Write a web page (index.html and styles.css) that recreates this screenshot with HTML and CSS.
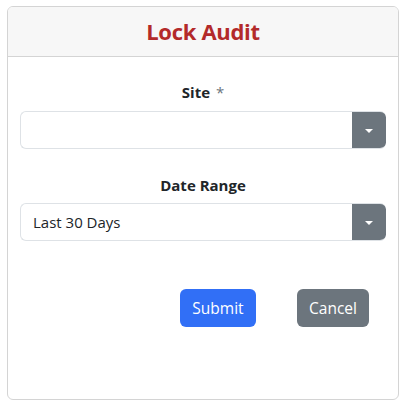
FILE: index.html
```html
<!DOCTYPE html>
<html>
<head>
<meta charset="utf-8">
<link rel="stylesheet" href="styles.css">
</head>
<body>
<div class="card">
  <div class="card-header"><h4 class="title">Lock Audit</h4></div>
  <div class="card-body">
    <div class="field">
      <label class="label">Site <span class="req">*</span></label>
      <div class="select">
        <div class="select-value"></div>
        <div class="select-btn"><span class="caret"></span></div>
      </div>
    </div>
    <div class="field field-2">
      <label class="label">Date Range</label>
      <div class="select">
        <div class="select-value">Last 30 Days</div>
        <div class="select-btn"><span class="caret"></span></div>
      </div>
    </div>
    <div class="actions">
      <button class="btn btn-primary">Submit</button>
      <button class="btn btn-secondary">Cancel</button>
    </div>
  </div>
</div>
</body>
</html>
```
FILE: styles.css
```css
* { box-sizing: border-box; }
html, body { margin: 0; padding: 0; background: #fff; }
body {
  font-family: "Open Sans", "Noto Sans", sans-serif;
  color: #212529;
  font-size: 16px;
}
.card {
  margin: 6px 0 0 7px;
  width: 392px;
  height: 394px;
  border: 1px solid #d4d4d4;
  border-radius: 6px;
  overflow: hidden;
  display: flex;
  flex-direction: column;
}
.card-header {
  height: 50px;
  background: #f7f7f7;
  border-bottom: 1px solid #d4d4d4;
  display: flex;
  align-items: center;
  justify-content: center;
}
.title {
  margin: 0;
  font-size: 22px;
  font-weight: 700;
  color: #b32a2a;
  line-height: 1;
  letter-spacing: -0.3px;
  padding-bottom: 2px;
}
.card-body {
  padding: 23px 12px 0 12px;
  display: flex;
  flex-direction: column;
}
.field { display: flex; flex-direction: column; }
.field-2 { margin-top: 24px; }
.label {
  display: block;
  text-align: center;
  font-weight: 700;
  font-size: 15px;
  line-height: 24px;
  height: 24px;
  margin-bottom: 7px;
}
.field-2 .label { margin-bottom: 6px; }
.req { font-weight: 400; color: #6c757d; margin-left: 2px; }
.select {
  display: flex;
  height: 38px;
  border: 1px solid #dee2e6;
  border-right: none;
  border-radius: 6px;
  overflow: hidden;
}
.select-value {
  flex: 1;
  padding: 0 12px;
  display: flex;
  align-items: center;
  font-size: 15px;
  color: #212529;
}
.select-btn {
  width: 34px;
  background: #6c757d;
  margin: -1px 0;
  display: flex;
  align-items: center;
  justify-content: center;
  border-radius: 0 6px 6px 0;
}
.caret {
  width: 0;
  height: 0;
  border-left: 4px solid transparent;
  border-right: 4px solid transparent;
  border-top: 4px solid #fff;
  margin-top: 1px;
}
.actions {
  margin-top: 48px;
  display: flex;
  justify-content: flex-end;
  gap: 41px;
  padding-right: 17px;
}
.btn {
  height: 38px;
  border: none;
  border-radius: 6px;
  color: #fff;
  font-family: inherit;
  font-size: 15.5px;
  padding: 0;
  cursor: pointer;
}
.btn-primary { width: 76px; background: #316ff6; }
.btn-secondary { width: 72px; background: #6c757d; }
```
